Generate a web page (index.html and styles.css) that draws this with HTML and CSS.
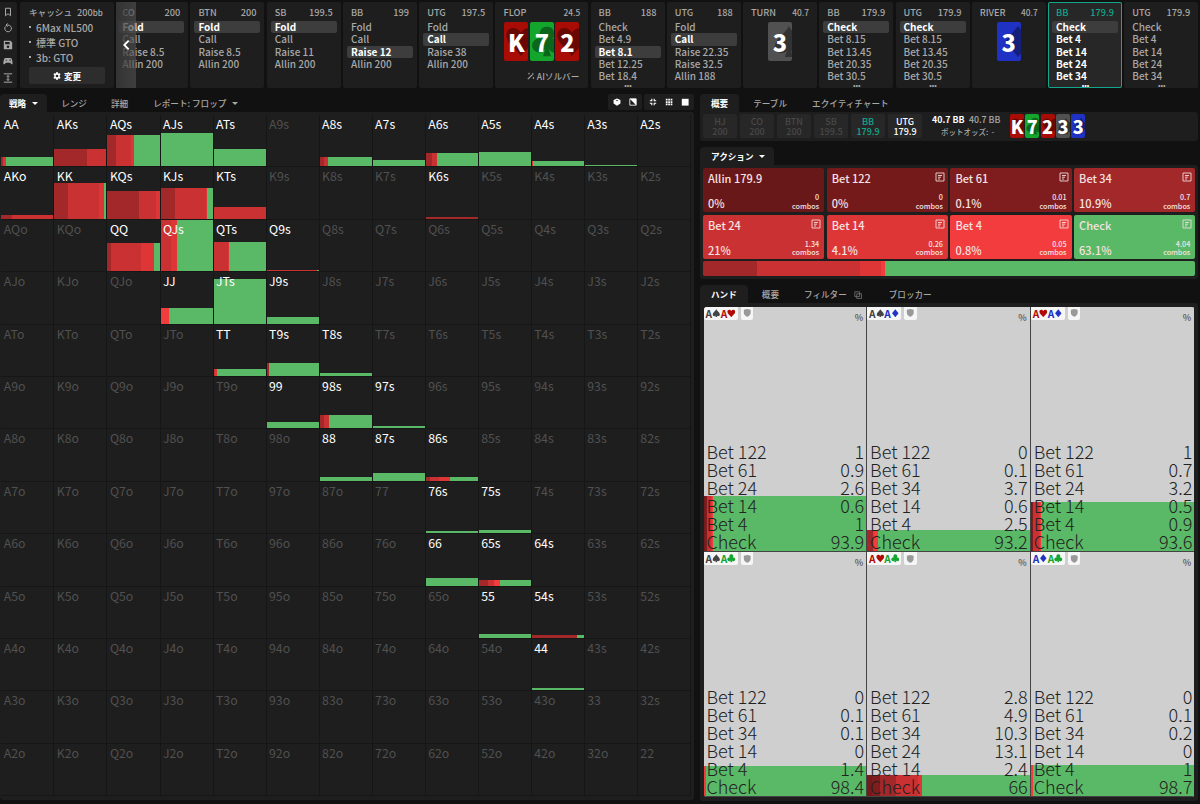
FILE: index.html
```html
<!DOCTYPE html>
<html lang="ja">
<head>
<meta charset="UTF-8">
<title>GTO</title>
<link rel="stylesheet" href="styles.css">
</head>
<body>
<svg class="defs">
  <symbol id="s" viewBox="0 0 24 24"><path d="M12 1C10 6 2 10 2 15.5C2 20.500 8 21.500 10.800 18.500L9 23H15L13.200 18.500C16 21.500 22 20.500 22 15.500C22 10 14 6 12 1Z"/></symbol>
  <symbol id="h" viewBox="0 0 24 24"><path d="M12 23C9 18 1 13.500 1 7.500C1 1 9 0 12 5.500C15 0 23 1 23 7.500C23 13.500 15 18 12 23Z"/></symbol>
  <symbol id="d" viewBox="0 0 24 24"><path d="M12 1L21 12L12 23L3 12Z"/></symbol>
  <symbol id="c" viewBox="0 0 24 24"><path d="M12 1A5.300 5.300 0 0 0 8 10A5.300 5.300 0 1 0 10.800 17.500L9 23H15L13.200 17.500A5.300 5.300 0 1 0 16 10A5.300 5.300 0 0 0 12 1Z"/></symbol>
  <symbol id="note" viewBox="0 0 10 10"><path d="M1 1H9V9H1ZM3 3.500H7M3 5.200H6M3 7H5" fill="none" stroke="currentColor"/></symbol>
  <symbol id="shield" viewBox="0 0 10 10"><path d="M5 .5L9 1.600V5C9 7.500 7 9 5 9.800C3 9 1 7.500 1 5V1.600Z"/></symbol>
</svg>

<div class="top">
  <div class="tools">
    <svg viewBox="0 0 12 12"><path d="M3 1.500H9V10.500L6 8L3 10.500Z" class="line"/></svg>
    <svg viewBox="0 0 12 12"><path d="M3 4A4 4 0 1 0 6 2.500H4M5.500 .5L3.500 2.500L5.500 4.500" class="line"/></svg>
    <svg viewBox="0 0 12 12"><path fill-rule="evenodd" d="M1 1H9L11 3V11H1ZM2.500 2.500V5H8V2.500ZM6 6.500A1.600 1.600 0 1 0 6 9.700A1.600 1.600 0 1 0 6 6.500Z"/></svg>
    <svg viewBox="0 0 12 12"><path fill-rule="evenodd" d="M3 2.500H9C11 2.500 11.500 7 11.500 9.500C10.500 11 9.500 9 8.500 8H3.500C2.500 9 1.500 11 .5 9.500C.5 7 1 2.500 3 2.500ZM3 5.500H5V4.500H3ZM8 4V6H9V4Z"/></svg>
    <svg viewBox="0 0 12 12"><path d="M1 1H11M1 11H11M6 3V9M4.500 4.500L6 3L7.500 4.500M4.500 7.500L6 9L7.500 7.500" class="line"/></svg>
  </div>
  <div class="game">
    <div class="game-head"><span>キャッシュ</span><span>200<small>bb</small></span></div>
    <ul>
      <li>6Max NL500</li>
      <li>標準 GTO</li>
      <li>3b: GTO</li>
    </ul>
    <button><svg viewBox="0 0 12 12"><path fill-rule="evenodd" d="M5 0H7L7.400 1.700L8.600 2.300L10.300 1.800L11.300 3.500L10.100 4.800V7.200L11.300 8.500L10.300 10.200L8.600 9.700L7.400 10.300L7 12H5L4.600 10.300L3.400 9.700L1.700 10.200L.7 8.500L1.900 7.200V4.800L.7 3.500L1.700 1.800L3.400 2.300L4.600 1.700ZM6 4A2 2 0 1 0 6 8A2 2 0 1 0 6 4Z"/></svg>変更</button>
  </div>
  <div class="history">
    <div class="cards" id="history"></div>
    <div class="prev"><svg viewBox="0 0 8 12"><path d="M6.500 1L1.500 6L6.500 11"/></svg></div>
  </div>
</div>

<div class="main">
  <div class="left">
    <div class="tabs">
      <span class="tab active">戦略 <i class="caret"></i></span>
      <span class="tab range">レンジ</span>
      <span class="tab detail">詳細</span>
      <span class="tab report">レポート: フロップ <i class="caret"></i></span>
      <div class="views">
        <div class="view-group">
          <svg viewBox="0 0 10 10"><path d="M5 .5L9.300 2.500V7L5 9.800L.7 7V2.500Z"/><path d="M3.500 3.200L5 4.200L6.500 3.200L5 2.500Z" fill="#1e1e1e"/></svg>
          <svg viewBox="0 0 10 10"><path d="M1 1H9V9H1Z" fill="none" stroke="#fff"/><path d="M1 1L9 9V1Z"/></svg>
        </div>
        <div class="view-group">
          <svg viewBox="0 0 10 10"><path d="M3.500 1V3.500H1M6.500 1V3.500H9M1 6.500H3.500V9M9 6.500H6.500V9" fill="none" stroke="#fff" stroke-width="1.400"/></svg>
          <svg viewBox="0 0 10 10"><path d="M1 1h2.200v2.200h-2.200zM4 1h2.200v2.200h-2.200zM7 1h2.200v2.200h-2.200zM1 4h2.200v2.200h-2.200zM4 4h2.200v2.200h-2.200zM7 4h2.200v2.200h-2.200zM1 7h2.200v2.200h-2.200zM4 7h2.200v2.200h-2.200zM7 7h2.200v2.200h-2.200z"/></svg>
          <svg viewBox="0 0 10 10"><path d="M1 1H9.500V9.500H1Z"/></svg>
        </div>
      </div>
    </div>
    <div class="matrix-panel">
      <div class="matrix" id="matrix"></div>
    </div>
  </div>

  <div class="right">
    <div class="tabs">
      <span class="tab active">概要</span>
      <span class="tab table">テーブル</span>
      <span class="tab equity">エクイティチャート</span>
    </div>
    <div class="summary">
      <div class="seat">HJ<br>200</div>
      <div class="seat">CO<br>200</div>
      <div class="seat">BTN<br>200</div>
      <div class="seat">SB<br>199.5</div>
      <div class="seat turn">BB<br>179.9</div>
      <div class="seat in">UTG<br>179.9</div>
      <div class="pot">
        <div><b>40.7 BB</b><span>40.7 BB</span></div>
        <div class="odds">ポットオッズ:&nbsp; -</div>
      </div>
      <div class="board" id="board"></div>
    </div>

    <div class="tabs second">
      <span class="tab active">アクション <i class="caret"></i></span>
    </div>
    <div class="actions">
      <div class="tiles" id="tiles"></div>
      <div class="total" id="total"></div>
    </div>

    <div class="tabs third">
      <span class="tab active">ハンド</span>
      <span class="tab sum">概要</span>
      <span class="tab filter">フィルター <svg viewBox="0 0 10 10"><path d="M1 1H7V7H1ZM3.500 3.500H9.500V9.500H3.500Z"/></svg></span>
      <span class="tab blocker">ブロッカー</span>
    </div>
    <div class="hands-panel">
      <div class="hands" id="hands"></div>
    </div>
  </div>
</div>
<script src="script.js"></script>
</body>
</html>
```
FILE: styles.css
```css
* {
  box-sizing: border-box;
  margin: 0;
  padding: 0;
}

body {
  width: 1200px;
  height: 804px;
  overflow: hidden;
  background: #111;
  color: #a8a8a8;
  font-family: "Noto Sans CJK JP", sans-serif;
  font-size: 10px;
  font-weight: 500;
}

svg {
  display: block;
  fill: currentColor;
}

.defs {
  width: 0;
  height: 0;
  position: absolute;
}

.line {
  fill: none;
  stroke: currentColor;
  stroke-width: 1.2;
}

/* top bar */
.top {
  display: flex;
  height: 88px;
  padding-top: 2px;
}

.tools {
  width: 17px;
  margin-right: 3px;
  background: #1e1e1e;
  border-radius: 0 2px 2px 0;
  display: flex;
  flex-direction: column;
  align-items: center;
  gap: 6.4px;
  padding: 5px 2px 0 0;
}

.tools svg {
  width: 10px;
  height: 10px;
}

.game {
  width: 94px;
  margin-right: 2px;
  padding: 3px 9px 0;
  background: #1e1e1e;
  border-radius: 2px;
}

.game-head {
  display: flex;
  gap: 5px;
  font-size: 9.2px;
  line-height: 15px;
  white-space: nowrap;
}

.game-head span:first-child {
  font-size: 8.6px;
}

.game-head small {
  font-size: 8px;
}

.game ul {
  list-style: none;
  line-height: 15px;
}

.game li::before {
  content: "";
  display: inline-block;
  width: 2px;
  height: 2px;
  margin: 0 5px 4px 0;
  background: #a8a8a8;
}

.game button {
  display: flex;
  align-items: center;
  justify-content: center;
  gap: 3px;
  width: 76px;
  height: 17px;
  margin-top: 2px;
  border: 0;
  border-radius: 2px;
  background: #2d2d2d;
  color: #fff;
  font: bold 8.6px "Noto Sans CJK JP", sans-serif;
}

.game button svg {
  width: 8px;
  height: 8px;
}

.history {
  position: relative;
  flex: 1;
  overflow: hidden;
}

.cards {
  display: flex;
  gap: 2.25px;
  height: 86px;
  margin-left: -1.800px;
}

.card {
  flex: none;
  width: 74px;
  padding: 3px 4px 0;
  background: #1e1e1e;
  border-radius: 2px;
  position: relative;
}

.card.flop {
  width: 92.8px;
}

.card.current {
  background: #272727;
  color: #fff;
  box-shadow: inset 0 0 0 1px #12a78b;
}

.card-head {
  display: flex;
  justify-content: space-between;
  padding: 0 4px;
  margin-bottom: 1px;
  font-size: 9.2px;
  line-height: 15px;
}

.street .card-head span:last-child {
  font-size: 8.4px;
}

.current .card-head {
  color: #12a78b;
}

.option {
  height: 12.33px;
  padding-left: 4px;
  line-height: 12.300px;
}

.option.taken {
  background: #3d3d3d;
  border-radius: 2px;
  color: #fff;
  font-weight: bold;
}

.current .option {
  font-weight: bold;
}

.more {
  position: absolute;
  left: 0;
  right: 0;
  bottom: -1px;
  padding-left: 1px;
  text-align: center;
  font-size: 7px;
  line-height: 8px;
}

.playing {
  display: flex;
  justify-content: center;
  gap: 1.5px;
  padding-top: 1px;
}

.play {
  position: relative;
  flex: none;
  width: 24px;
  height: 39px;
  overflow: hidden;
  border-radius: 2px;
  color: #fff;
  font-size: 23.500px;
  font-weight: bold;
  line-height: 40px;
  text-align: center;
}

.play svg {
  position: absolute;
  left: 1px;
  top: 0;
  width: 32px;
  height: 39px;
  fill: rgba(0, 0, 0, .38);
}

.play.s svg,
.play.d svg {
  left: 4px;
  top: -2px;
  width: 34px;
  height: 43px;
}

.play b {
  position: relative;
}

.play.h { background: #a90c05; }
.play.c { background: #13a52c; }
.play.s { background: #515151; }
.play.d { background: #2032c4; }

.ai {
  display: flex;
  align-items: center;
  justify-content: flex-end;
  gap: 2px;
  padding: 7px 5px 0 0;
  font-size: 8.6px;
  line-height: 16px;
}

.ai svg {
  width: 8px;
  height: 8px;
}

.prev {
  position: absolute;
  left: 0;
  top: 0;
  width: 20px;
  height: 86px;
  background: linear-gradient(90deg, rgba(54, 54, 54, .9), rgba(84, 84, 84, .6));
}

.prev svg {
  width: 7px;
  height: 12px;
  margin: 37px 0 0 6.500px;
  fill: none;
  stroke: #fff;
  stroke-width: 2.2;
}

/* panels */
.main {
  display: flex;
  padding-top: 6px;
}

.left {
  width: 694px;
  margin-right: 6px;
}

.right {
  width: 498px;
}

.tabs {
  display: flex;
  height: 18px;
  font-size: 8.6px;
  line-height: 19px;
  white-space: nowrap;
}

.tab.active {
  height: 18px;
  padding: 0 9.500px 0 9px;
  border-radius: 4px 4px 0 0;
  background: #1e1e1e;
  color: #fff;
  font-weight: bold;
}

.right .tab.active {
  padding: 0 11px;
}

.right .second .tab.active {
  padding-right: 9px;
}

.caret {
  display: inline-block;
  margin: 0 0 2px 3.500px;
  border: 3px solid transparent;
  border-top-color: currentColor;
  border-bottom: 0;
}

.range { margin-left: 14px; }
.detail { margin-left: 24px; }
.report { margin-left: 25px; }
.table { margin-left: 14px; }
.equity { margin-left: 25px; }
.sum { margin-left: 14px; }
.filter { margin-left: 25px; }
.blocker { margin-left: 27px; }

.filter svg {
  display: inline-block;
  width: 8px;
  height: 8px;
  margin-left: 5px;
  fill: none;
  stroke: #777;
  vertical-align: -1px;
}

.views {
  display: flex;
  gap: 2px;
  height: 16px;
  margin-left: auto;
  color: #fff;
}

.view-group {
  display: flex;
  align-items: center;
  gap: 8px;
  padding: 0 5px;
  border-radius: 2px;
  background: #1e1e1e;
}

.view-group svg {
  width: 8px;
  height: 8px;
}

.matrix-panel {
  height: 688px;
  padding: 3px 0 0 1.400px;
  background: #1e1e1e;
  border-radius: 0 3px 3px 3px;
}

.matrix {
  display: grid;
  grid-template-columns: repeat(13, 53.05px);
  grid-template-rows: repeat(13, 52.4px);
}

.cell {
  display: grid;
  border-right: 1px solid #161616;
  border-bottom: 1px solid #161616;
  color: #505050;
  font-size: 12.3px;
  font-weight: 400;
  line-height: 19px;
}

.cell > * {
  grid-area: 1 / 1;
}

.cell span {
  z-index: 1;
  padding-left: 2.400px;
}

.cell.on {
  color: #fff;
}

.mix {
  display: flex;
  align-self: end;
  min-width: 0;
}

.mix i {
  flex: none;
}

.allin { background: #691819; }
.b122 { background: #741a1b; }
.b61 { background: #7f1d1e; }
.b34 { background: #a3282a; }
.b24 { background: #ca3132; }
.b14 { background: #de3637; }
.b4 { background: #f23c3e; }
.check { background: #5ab966; }

/* summary */
.summary {
  display: flex;
  gap: 3px;
  height: 29px;
  padding: 2px 3px;
  background: #1e1e1e;
  border-radius: 0 3px 3px 3px;
}

.seat {
  width: 34px;
  height: 24px;
  padding-top: 3px;
  border-radius: 2px;
  background: #272727;
  color: #484848;
  font-size: 9px;
  line-height: 9.500px;
  text-align: center;
}

.seat.turn {
  color: #12a78b;
}

.seat.in {
  color: #fff;
}

.pot {
  width: 82px;
  padding-left: 7px;
  font-size: 8.8px;
  line-height: 12px;
  white-space: nowrap;
}

.pot b {
  margin-right: 4.500px;
  color: #fff;
}

.odds {
  padding-left: 9px;
  font-size: 7.500px;
}

.board {
  display: flex;
  gap: 1.300px;
}

.board .play {
  width: 14px;
  height: 24px;
  font-size: 18px;
  line-height: 24px;
}

.board .play svg {
  left: 1px;
  top: 0;
  width: 18px;
  height: 24px;
}

/* actions */
.second {
  margin-top: 6px;
}

.actions {
  height: 114px;
  padding: 3px;
  background: #1e1e1e;
  border-radius: 0 3px 3px 3px;
}

.tiles {
  display: grid;
  grid-template-columns: repeat(4, 121.2px);
  grid-auto-rows: 44px;
  gap: 2.500px;
}

.tile {
  display: grid;
  grid-template-columns: 1fr auto;
  grid-template-rows: 20px 20px;
  padding: 0 5px;
  border-radius: 2px;
  color: #f4e3e3;
  font-size: 11px;
  line-height: 20px;
}

.tile svg {
  width: 10px;
  height: 10px;
  margin: 4px -2px 0 auto;
  opacity: .85;
}

.tile .pct {
  padding-top: 5px;
}

.tile .combos {
  padding-top: 5px;
  font-size: 7.200px;
  line-height: 8.500px;
  text-align: right;
}

.total {
  display: flex;
  height: 15px;
  margin-top: 2.500px;
  overflow: hidden;
  border-radius: 2px;
}

/* hands */
.third {
  margin-top: 6px;
}

.hands-panel {
  height: 498px;
  padding: 3.500px;
  background: #1e1e1e;
  border-radius: 0 3px 3px 3px;
}

.hands {
  display: grid;
  grid-template-columns: repeat(3, 163.6px);
  grid-auto-rows: 245.3px;
  overflow: hidden;
  border-radius: 3px;
}

.hand {
  display: grid;
  grid-template-rows: 1fr;
  border-right: 1px solid #444;
  border-bottom: 1px solid #444;
  background: #cfcfcf;
  color: #222;
}

.hand:nth-child(3n) {
  border-right: 0;
}

.hand > * {
  grid-area: 1 / 1;
}

.hand-head {
  display: flex;
  align-self: start;
  gap: 3px;
  height: 14px;
  font-size: 10.2px;
}

.combo,
.lock {
  display: flex;
  align-items: center;
  height: 13px;
  padding: 0 2px;
  background: #f6f6f6;
  border-radius: 0 0 2px 2px;
  font-weight: bold;
}

.combo svg {
  width: 8.600px;
  height: 8.600px;
}

.lock svg {
  width: 8.500px;
  height: 9.500px;
  fill: #999;
}

.combo .s { color: #444; }
.combo .h { color: #b00c05; }
.combo .d { color: #2032c4; }
.combo .c { color: #13a52c; }

.combo span {
  display: flex;
  align-items: center;
}

.percent {
  margin-left: auto;
  padding: 4px 3px 0 0;
  color: #555;
  font-size: 9px;
  line-height: 13px;
}

.lines {
  align-self: end;
  padding: 0 2px 1px 3px;
  font-size: 18px;
  font-weight: 300;
  line-height: 18px;
  z-index: 1;
}

.lines div {
  display: flex;
  justify-content: space-between;
}
```
FILE: script.js
```js
var use = function(id) {
  return '<svg><use href="#' + id + '"/></svg>';
};

var play = function(c) {
  return '<div class="play ' + c[1] + '">' + use(c[1]) + '<b>' + c[0] + '</b></div>';
};

// mix: {action: percent}
var segments = function(mix) {
  return Object.keys(mix).map(function(k) {
    return '<i class="' + k + '" style="' + (k == 'check' ? 'flex: 1' : 'width: ' + mix[k] + '%') + '"></i>';
  }).join('');
};

// name, stack, options, index of the option taken
var nodes = [
  ['CO', 200, 'Fold|Call|Raise 8.5|Allin 200', 0],
  ['BTN', 200, 'Fold|Call|Raise 8.5|Allin 200', 0],
  ['SB', 199.5, 'Fold|Call|Raise 11|Allin 200', 0],
  ['BB', 199, 'Fold|Call|Raise 12|Allin 200', 2],
  ['UTG', 197.5, 'Fold|Call|Raise 38|Allin 200', 1],
  ['FLOP', 24.5, ['Kh', '7c', '2h']],
  ['BB', 188, 'Check|Bet 4.9|Bet 8.1|Bet 12.25|Bet 18.4', 2],
  ['UTG', 188, 'Fold|Call|Raise 22.35|Raise 32.5|Allin 188', 1],
  ['TURN', 40.7, ['3s']],
  ['BB', 179.9, 'Check|Bet 8.15|Bet 13.45|Bet 20.35|Bet 30.5', 0],
  ['UTG', 179.9, 'Check|Bet 8.15|Bet 13.45|Bet 20.35|Bet 30.5', 0],
  ['RIVER', 40.7, ['3d']],
  ['BB', 179.9, 'Check|Bet 4|Bet 14|Bet 24|Bet 34', 0, true],
  ['UTG', 179.9, 'Check|Bet 4|Bet 14|Bet 24|Bet 34', -1]
];

document.getElementById('history').innerHTML = nodes.map(function(n) {
  var street = typeof n[2] != 'string', cls = 'card', body;
  if (street) {
    cls += ' street' + (n[0] == 'FLOP' ? ' flop' : '');
    body = '<div class="playing">' + n[2].map(play).join('') + '</div>';
    if (n[0] == 'FLOP') {
      body += '<div class="ai"><svg viewBox="0 0 10 10"><path d="M.5 8.500L6 3L7 4L1.500 9.500ZM7 .5L7.500 2L9 2.500L7.500 3L7 4.500L6.500 2.500ZM2.500 .5L3.500 2L2.500 3.500L1.500 2ZM8 6L9 7.500L8 9L7 7.500Z"/></svg>AIソルバー</div>';
    }
  } else {
    var opts = n[2].split('|');
    if (n[4]) cls += ' current';
    body = opts.map(function(o, i) {
      return '<div class="option' + (i == n[3] ? ' taken' : '') + '">' + o + '</div>';
    }).join('');
    if (opts.length > 4 && opts[0] == 'Check') body += '<div class="more">•••</div>';
  }
  return '<div class="' + cls + '"><div class="card-head"><span>' + n[0] + '</span><span>' + n[1] + '</span></div>' + body + '</div>';
}).join('');

document.getElementById('board').innerHTML = ['Kh', '7c', '2h', '3s', '3d'].map(play).join('');

// hand: [bar height, mix]
var range = {
  AA: [9.7, {b34: 3, b14: 5, check: 92}],
  AKs: [17.3, {b34: 63, b24: 37}],
  AQs: [31.3, {b34: 16, b24: 29, b14: 6, check: 49}],
  AJs: [33.7, {b24: 1, check: 99}],
  ATs: [17.3, {check: 100}],
  A8s: [9.3, {b34: 8, b24: 8, check: 84}],
  A7s: [6.7, {check: 100}],
  A6s: [13.7, {b34: 12, b24: 10, check: 78}],
  A5s: [14.3, {b14: 1, check: 99}],
  A4s: [5.7, {b14: 1.5, check: 98.5}],
  A3s: [1, {check: 100}],
  A2s: [0, {}],
  AKo: [4, {b34: 20, b24: 80}],
  KK: [36, {b34: 27, b24: 58, b14: 10, b4: 1, check: 4}],
  KQs: [27.5, {b34: 61, b24: 33, b14: 6}],
  KJs: [31, {b34: 28, b24: 59, b14: 2, check: 11}],
  KTs: [12, {b24: 100}],
  K6s: [1.3, {b34: 100}],
  QQ: [28.5, {b34: 6, b24: 58, b14: 25, b4: 1, check: 10}],
  QJs: [51.4, {b24: 20, b14: 11, check: 69}],
  QTs: [28.7, {b24: 28, b14: 2, check: 70}],
  Q9s: [1.3, {b24: 97, check: 3}],
  JJ: [16, {b24: 1, b4: 16, check: 83}],
  JTs: [45, {check: 100}],
  J9s: [6.7, {check: 100}],
  TT: [7.4, {b24: 3, b14: 3, check: 94}],
  T9s: [12.7, {b34: 4, b14: 1, check: 95}],
  T8s: [2.7, {check: 100}],
  99: [6, {check: 100}],
  '98s': [13.7, {b34: 8, b24: 9, check: 83}],
  '97s': [2, {check: 100}],
  88: [3.4, {check: 100}],
  '87s': [7.4, {check: 100}],
  '86s': [4, {b34: 8, b24: 18, b14: 20, check: 54}],
  '76s': [1.8, {check: 100}],
  '75s': [3.5, {check: 100}],
  66: [7.7, {check: 100}],
  '65s': [5.5, {b34: 17, b24: 13, b4: 11, check: 59}],
  '64s': [0, {}],
  55: [4, {check: 100}],
  '54s': [2.5, {b34: 86, check: 14}],
  44: [2, {check: 100}]
};

var ranks = 'AKQJT98765432'.split(''), cells = '';
ranks.forEach(function(a, i) {
  ranks.forEach(function(b, j) {
    var name = i == j ? a + a : i < j ? a + b + 's' : b + a + 'o', r = range[name];
    cells += '<div class="cell' + (r ? ' on' : '') + '"><span>' + name + '</span>';
    if (r) cells += '<div class="mix" style="height: ' + r[0] + 'px">' + segments(r[1]) + '</div>';
    cells += '</div>';
  });
});
document.getElementById('matrix').innerHTML = cells;

var actions = [
  ['allin', 'Allin 179.9', 0, 0],
  ['b122', 'Bet 122', 0, 0],
  ['b61', 'Bet 61', 0.1, 0.01],
  ['b34', 'Bet 34', 10.9, 0.7],
  ['b24', 'Bet 24', 21, 1.34],
  ['b14', 'Bet 14', 4.1, 0.26],
  ['b4', 'Bet 4', 0.8, 0.05],
  ['check', 'Check', 63.1, 4.04]
];
var total = {};
document.getElementById('tiles').innerHTML = actions.map(function(a) {
  total[a[0]] = a[2];
  return '<div class="tile ' + a[0] + '"><span>' + a[1] + '</span>' +
    (a[0] == 'allin' ? '<span></span>' : use('note')) +
    '<span class="pct">' + a[2] + '%</span><span class="combos">' + a[3] + '<br>combos</span></div>';
}).join('');
document.getElementById('total').innerHTML = segments(total);

// suits, bar height, action mix
var hands = [
  ['sh', 55, {b122: 1, b61: 0.9, b24: 2.6, b14: 0.6, b4: 1, check: 93.9}],
  ['sd', 21, {b122: 0, b61: 0.1, b34: 3.7, b14: 0.6, b4: 2.5, check: 93.2}],
  ['hd', 49, {b122: 1, b61: 0.7, b24: 3.2, b14: 0.5, b4: 0.9, check: 93.6}],
  ['sc', 30.5, {b122: 0, b61: 0.1, b34: 0.1, b14: 0, b4: 1.4, check: 98.4}],
  ['hc', 21.5, {b122: 2.8, b61: 4.9, b34: 10.3, b24: 13.1, b14: 2.4, check: 66}],
  ['dc', 31, {b122: 0, b61: 0.1, b34: 0.2, b14: 0, b4: 1, check: 98.7}]
];
document.getElementById('hands').innerHTML = hands.map(function(h) {
  var combo = h[0].split('').map(function(s) {
    return '<span class="' + s + '">A' + use(s) + '</span>';
  }).join('');
  var lines = Object.keys(h[2]).map(function(k) {
    var label = k == 'check' ? 'Check' : 'Bet ' + k.slice(1);
    return '<div><span>' + label + '</span><span>' + h[2][k] + '</span></div>';
  }).join('');
  return '<div class="hand"><div class="hand-head"><div class="combo">' + combo + '</div><div class="lock">' + use('shield') +
    '</div><span class="percent">%</span></div><div class="mix" style="height: ' + h[1] + 'px">' + segments(h[2]) +
    '</div><div class="lines">' + lines + '</div></div>';
}).join('');
```
